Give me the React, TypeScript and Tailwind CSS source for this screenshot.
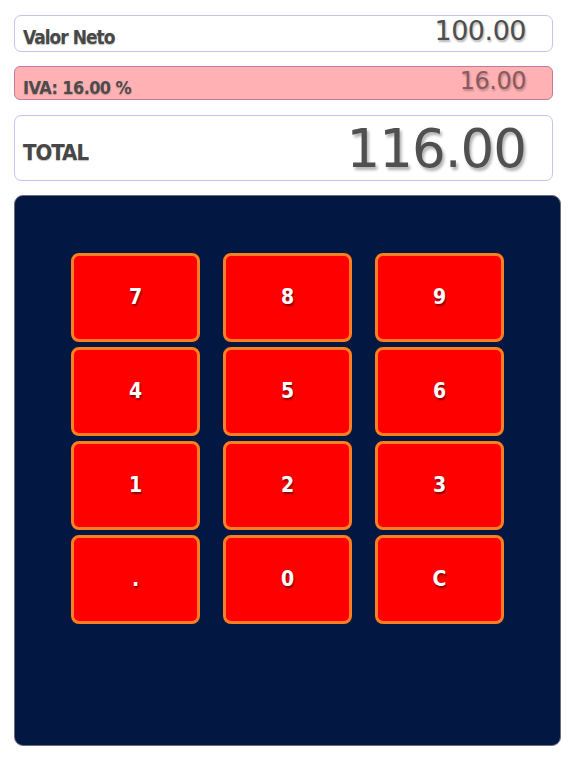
import { useState } from 'react';

const keys = ['7', '8', '9', '4', '5', '6', '1', '2', '3', '.', '0', 'C'];

const labelFont = { fontFamily: '"DejaVu Sans Condensed", "Liberation Sans Narrow", "DejaVu Sans", sans-serif' };

function App(): JSX.Element {
  const [neto] = useState(100);
  const iva = 16;
  const ivaAmount = (neto * iva) / 100;
  const total = neto + ivaAmount;

  return (
    <div className="w-[576px] h-[768px] bg-white pt-[15px] pl-[14px]">
      <div className="w-[539px] h-[37px] border border-[#c9c2ea] rounded-[7px] bg-white flex items-end justify-between pl-[8px] pr-[26px] pb-[4px]">
        <span
          className="text-[19px] font-bold text-[#484848] tracking-[-1px] leading-none [font-stretch:condensed] [text-shadow:0_1px_1px_rgba(0,0,0,0.25)]"
          style={labelFont}
        >
          Valor Neto
        </span>
        <span className="font-['DejaVu_Sans',sans-serif] text-[27px] text-[#4e4e4e] leading-none mb-[3px] tracking-[-0.5px] [text-shadow:1px_2px_2px_rgba(0,0,0,0.3)]">
          {neto.toFixed(2)}
        </span>
      </div>

      <div className="mt-[14px] w-[539px] h-[34px] border border-[#c47b98] rounded-[6px] bg-[#ffb1b4] flex items-end justify-between pl-[8px] pr-[26px] pb-[2px]">
        <span
          className="text-[18px] font-bold text-[#4c4c4c] tracking-[-0.6px] leading-none [font-stretch:condensed] [text-shadow:0_1px_1px_rgba(0,0,0,0.2)]"
          style={labelFont}
        >
          IVA: {iva.toFixed(2)} %
        </span>
        <span className="font-['DejaVu_Sans',sans-serif] text-[24px] text-[#8a5a5e] leading-none mb-[4px] tracking-[-0.5px] [text-shadow:1px_2px_2px_rgba(0,0,0,0.25)]">
          {ivaAmount.toFixed(2)}
        </span>
      </div>

      <div className="mt-[15px] w-[539px] h-[66px] border border-[#c9c2ea] rounded-[7px] bg-white flex items-center justify-between pl-[8px] pr-[26px]">
        <span
          className="mt-[10px] text-[22px] font-bold text-[#474747] tracking-[-1px] leading-none [font-stretch:condensed] [text-shadow:0_1px_1px_rgba(0,0,0,0.25)]"
          style={labelFont}
        >
          TOTAL
        </span>
        <span className="font-['DejaVu_Sans',sans-serif] text-[53px] text-[#505050] leading-none tracking-[-1px] [text-shadow:2px_3px_3px_rgba(0,0,0,0.3)]">
          {total.toFixed(2)}
        </span>
      </div>

      <div className="mt-[14px] w-[547px] h-[551px] bg-[#021741] rounded-[9px] border border-[#6b6f7a] pt-[57px] px-[56px]">
        <div className="grid grid-cols-3 gap-x-[23px] gap-y-[5px]">
          {keys.map((k) => (
            <button
              key={k}
              type="button"
              className="h-[89px] bg-[#fe0000] border-[3px] border-[#ff7e22] rounded-[8px] flex items-center justify-center text-white text-[21px] font-bold [font-stretch:condensed] [text-shadow:1px_2px_2px_rgba(0,0,0,0.45)]"
              style={labelFont}
            >
              {k}
            </button>
          ))}
        </div>
      </div>
    </div>
  );
}

export default App;
